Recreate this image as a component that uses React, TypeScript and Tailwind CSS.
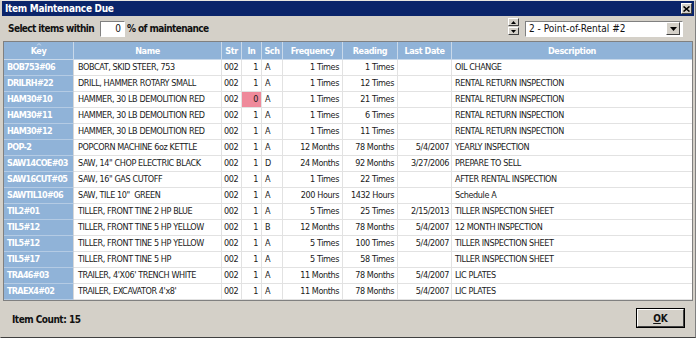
import React from "react";

type Row = {
  key: string;
  name: string;
  inn: string;
  sch: string;
  freq: string;
  reading: string;
  last: string;
  desc: string;
  pink?: boolean;
};

const rows: Row[] = [
  { key: "BOB753#06", name: "BOBCAT, SKID STEER, 753", inn: "1", sch: "A", freq: "1 Times", reading: "1 Times", last: "", desc: "OIL CHANGE" },
  { key: "DRILRH#22", name: "DRILL, HAMMER ROTARY SMALL", inn: "1", sch: "A", freq: "1 Times", reading: "12 Times", last: "", desc: "RENTAL RETURN INSPECTION" },
  { key: "HAM30#10", name: "HAMMER, 30 LB DEMOLITION RED", inn: "0", sch: "A", freq: "1 Times", reading: "21 Times", last: "", desc: "RENTAL RETURN INSPECTION", pink: true },
  { key: "HAM30#11", name: "HAMMER, 30 LB DEMOLITION RED", inn: "1", sch: "A", freq: "1 Times", reading: "6 Times", last: "", desc: "RENTAL RETURN INSPECTION" },
  { key: "HAM30#12", name: "HAMMER, 30 LB DEMOLITION RED", inn: "1", sch: "A", freq: "1 Times", reading: "11 Times", last: "", desc: "RENTAL RETURN INSPECTION" },
  { key: "POP-2", name: "POPCORN MACHINE 6oz KETTLE", inn: "1", sch: "A", freq: "12 Months", reading: "78 Months", last: "5/4/2007", desc: "YEARLY INSPECTION" },
  { key: "SAW14COE#03", name: "SAW, 14\" CHOP ELECTRIC BLACK", inn: "1", sch: "D", freq: "24 Months", reading: "92 Months", last: "3/27/2006", desc: "PREPARE TO SELL" },
  { key: "SAW16CUT#05", name: "SAW, 16\" GAS CUTOFF", inn: "1", sch: "A", freq: "1 Times", reading: "22 Times", last: "", desc: "AFTER RENTAL INSPECTION" },
  { key: "SAWTIL10#06", name: "SAW, TILE 10\"  GREEN", inn: "1", sch: "A", freq: "200 Hours", reading: "1432 Hours", last: "", desc: "Schedule A" },
  { key: "TIL2#01", name: "TILLER, FRONT TINE 2 HP BLUE", inn: "1", sch: "A", freq: "5 Times", reading: "25 Times", last: "2/15/2013", desc: "TILLER INSPECTION SHEET" },
  { key: "TIL5#12", name: "TILLER, FRONT TINE 5 HP YELLOW", inn: "1", sch: "B", freq: "12 Months", reading: "78 Months", last: "5/4/2007", desc: "12 MONTH INSPECTION" },
  { key: "TIL5#12", name: "TILLER, FRONT TINE 5 HP YELLOW", inn: "1", sch: "A", freq: "5 Times", reading: "100 Times", last: "5/4/2007", desc: "TILLER INSPECTION SHEET" },
  { key: "TIL5#17", name: "TILLER, FRONT TINE 5 HP", inn: "1", sch: "A", freq: "5 Times", reading: "58 Times", last: "", desc: "TILLER INSPECTION SHEET" },
  { key: "TRA46#03", name: "TRAILER, 4'X06' TRENCH WHITE", inn: "1", sch: "A", freq: "11 Months", reading: "78 Months", last: "5/4/2007", desc: "LIC PLATES" },
  { key: "TRAEX4#02", name: "TRAILER, EXCAVATOR 4'x8'", inn: "1", sch: "A", freq: "11 Months", reading: "78 Months", last: "5/4/2007", desc: "LIC PLATES" },
];

const grid = "grid grid-cols-[70px_148px_20px_20px_21px_60px_55px_54px_1fr]";
const font = { fontFamily: '"DejaVu Sans Condensed", "Liberation Sans", sans-serif' };

export default function App() {
  return (
    <div
      className="w-[696px] h-[338px] bg-[#d4d0c8] flex flex-col overflow-hidden border-t border-[#e8e6e0] border-l border-l-[#d4d0c8] border-r border-r-[#808080] border-b border-b-[#404040]"
      style={font}
    >
      {/* Title bar */}
      <div className="h-[15px] mx-[1px] bg-[#0a246a] flex items-center justify-between pl-[3px] pr-[2px]">
        <span className="text-white font-bold text-[10px] tracking-[-0.3px] leading-none">Item Maintenance Due</span>
        <div className="w-[11px] h-[11px] bg-[#d4d0c8] border border-t-white border-l-white border-r-[#404040] border-b-[#404040] flex items-center justify-center">
          <svg width="7" height="6" viewBox="0 0 7 6">
            <path d="M0.5 0.5 L6.5 5.5 M6.5 0.5 L0.5 5.5" stroke="#000" strokeWidth="1.6" />
          </svg>
        </div>
      </div>

      {/* Toolbar */}
      <div className="h-[25px] flex items-center pl-[7px] pr-[12px]">
        <span className="font-bold text-[10px] tracking-[-0.6px] text-[#111] leading-none whitespace-nowrap">Select items within</span>
        <div className="ml-[6px] w-[25px] h-[16px] bg-white border border-t-[#808080] border-l-[#808080] border-r-white border-b-white flex items-center justify-end pr-[3px] text-[10px] text-[#111]">
          0
        </div>
        <span className="ml-[2px] font-bold text-[10px] tracking-[-0.6px] text-[#111] leading-none whitespace-nowrap">% of maintenance</span>
        <div className="flex-1" />
        <div className="flex flex-col gap-[1px] mr-[6px] mt-[-4px]">
          <div className="w-[11px] h-[8px] bg-[#d4d0c8] border border-t-white border-l-white border-r-[#404040] border-b-[#404040] flex items-center justify-center">
            <svg width="5" height="3" viewBox="0 0 5 3"><path d="M2.5 0 L5 3 L0 3 Z" fill="#000" /></svg>
          </div>
          <div className="w-[11px] h-[8px] bg-[#d4d0c8] border border-t-white border-l-white border-r-[#404040] border-b-[#404040] flex items-center justify-center">
            <svg width="5" height="3" viewBox="0 0 5 3"><path d="M0 0 L5 0 L2.5 3 Z" fill="#000" /></svg>
          </div>
        </div>
        <div className="w-[158px] h-[16px] bg-white border border-t-[#808080] border-l-[#808080] border-r-white border-b-white flex items-center">
          <span className="flex-1 pl-[3px] text-[10px] text-[#111] leading-none">2 - Point-of-Rental #2</span>
          <div className="w-[14px] h-[13px] mr-[2px] bg-[#d4d0c8] border border-t-white border-l-white border-r-[#404040] border-b-[#404040] flex items-center justify-center">
            <svg width="7" height="4" viewBox="0 0 7 4"><path d="M0 0 L7 0 L3.5 4 Z" fill="#000" /></svg>
          </div>
        </div>
      </div>

      {/* Table */}
      <div className="ml-[2px] w-[690px] border border-[#808080] bg-white">
        <div className={`${grid} h-[18px] bg-[#90b3d8] border-b border-[#c9d9ea]`}>
          {["Key", "Name", "Str", "In", "Sch", "Frequency", "Reading", "Last Date", "Description"].map((h, i) => (
            <div
              key={h}
              className={`relative flex items-center justify-center pt-[1px] text-white font-bold text-[9px] tracking-[-0.4px] leading-none ${i < 8 ? "border-r border-[#c9d9ea]" : ""}`}
            >
              {i === 0 && (
                <svg className="absolute top-[1px] left-1/2 -translate-x-1/2" width="5" height="3" viewBox="0 0 5 3">
                  <path d="M0.5 2.5 L2.5 0.5 L4.5 2.5" stroke="#e3ebf5" strokeWidth="0.8" fill="none" />
                </svg>
              )}
              {h}
            </div>
          ))}
        </div>
        {rows.map((r, idx) => (
          <div key={idx} className={`${grid} h-[16px] text-[9px] tracking-[-0.4px] text-[#1a1a1a] leading-none`}>
            <div className="bg-[#90b3d8] border-r border-[#d8d8d8] border-b border-b-[#b4cbe4] flex items-center pl-[3px] text-white font-semibold tracking-[-0.7px] whitespace-nowrap overflow-hidden">
              {r.key}
            </div>
            <div className="border-r border-b border-[#e2e2e2] flex items-center pl-[4px] whitespace-pre">{r.name}</div>
            <div className="border-r border-b border-[#e2e2e2] flex items-center pl-[2px]">002</div>
            <div className={`border-r border-b border-[#e2e2e2] flex items-center justify-end pr-[3px] ${r.pink ? "bg-[#ef8a9b]" : ""}`}>{r.inn}</div>
            <div className="border-r border-b border-[#e2e2e2] flex items-center pl-[3px]">{r.sch}</div>
            <div className="border-r border-b border-[#e2e2e2] flex items-center justify-end pr-[3px]">{r.freq}</div>
            <div className="border-r border-b border-[#e2e2e2] flex items-center justify-end pr-[3px]">{r.reading}</div>
            <div className="border-r border-b border-[#e2e2e2] flex items-center justify-end pr-[2px]">{r.last}</div>
            <div className="border-b border-[#e2e2e2] flex items-center pl-[3px]">{r.desc}</div>
          </div>
        ))}
      </div>

      {/* Footer */}
      <div className="flex-1 flex items-center justify-between pl-[11px] pr-[10px]">
        <span className="font-bold text-[10px] tracking-[-0.5px] text-[#111] leading-none mt-[2px]">Item Count: 15</span>
        <div className="w-[49px] h-[20px] border border-black mb-[2px]">
          <div className="w-full h-full bg-[#d4d0c8] border border-t-white border-l-white border-r-[#404040] border-b-[#404040] flex items-center justify-center text-[10px] font-bold text-[#111]">
            <span><span className="underline">O</span>K</span>
          </div>
        </div>
      </div>
    </div>
  );
}
